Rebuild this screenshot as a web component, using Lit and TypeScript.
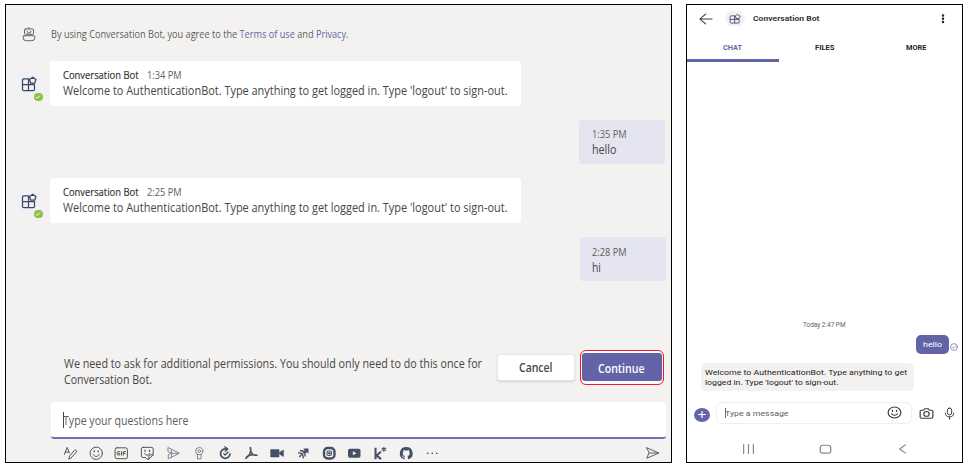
import { LitElement, html, css, svg, TemplateResult, SVGTemplateResult } from "lit";
import { customElement, property, state } from "lit/decorators.js";
import { styleMap } from "lit/directives/style-map.js";

/** One line of text condensed or expanded to a given measure. */
@customElement("fit-line")
class FitLine extends LitElement {
  static styles = css`
    :host { display: block; white-space: nowrap; flex: none; }
    .line { display: inline-block; transform-origin: 0 50%; vertical-align: top; }
    ::slotted(a) { color: #6264a7; text-decoration: none; }
  `;
  @property({ type: Number }) measure = 100;
  @state() private ratio = 1;

  firstUpdated() {
    const line = this.renderRoot.querySelector<HTMLElement>(".line")!;
    const natural = line.getBoundingClientRect().width;
    if (natural > 0) this.ratio = this.measure / natural;
    this.style.width = `${this.measure}px`;
  }
  render() {
    return html`<span class="line" style=${styleMap({ transform: `scaleX(${this.ratio})` })}><slot></slot></span>`;
  }
}

const icons: Record<string, SVGTemplateResult> = {
  robot: svg`<rect x="3.500" y="2" width="9" height="5.800" rx="1.200"/><path d="M8 .6V2M6.200 4.300v.7M9.800 4.300v.7M6.500 6.200h3M3 9.300h10a.8.800 0 0 1 .8.800v1.500a3 3 0 0 1-3 3H5.200a3 3 0 0 1-3-3v-1.500A.8.800 0 0 1 3 9.300z"/>`,
  app: svg`<path d="M1.500 4.200a1.300 1.300 0 0 1 1.300-1.300H7.500V14.500H2.800a1.300 1.300 0 0 1-1.300-1.300zM1.500 8.700h12v4.500a1.300 1.300 0 0 1-1.300 1.300H7.500M7.500 8.700V6.500"/><path d="M11.700 1.200 14.900 3.500 13.700 7.200H9.700L8.500 3.500z"/>`,
  format: svg`<path d="M1.500 9.300 4.600 1.500 7 7.500M2.600 6.800H6M6.500 14l.7-2.900 5.500-6.300a1.400 1.400 0 0 1 2 1.900l-5.600 6.300z"/>`,
  smile: svg`<circle cx="8" cy="8" r="6.800"/><path d="M4.700 9.400c.8 1.500 2 2.100 3.300 2.100s2.500-.6 3.300-2.100"/><path d="M5.800 5.500v.9M10.200 5.500v.9" stroke-width="1.500"/>`,
  gif: svg`<rect x="1.200" y="2" width="13.600" height="12" rx="2"/><path d="M6.300 6.300H4.300a.8.800 0 0 0-.8.800v2a.8.800 0 0 0 .8.800h2V8.200H5.200M8.300 6.200v3.900M10.300 10.100V6.300h2.500M10.300 8.300h2"/>`,
  sticker: svg`<path d="M3.100 1.500h9.800a1.600 1.600 0 0 1 1.600 1.600v6.700l-4.700 4.700H7.500L6 12.700H3.100a1.600 1.600 0 0 1-1.600-1.600v-8a1.600 1.600 0 0 1 1.600-1.600zM14.500 9.800h-3.200a1.500 1.500 0 0 0-1.500 1.500v3.200M5 8.300c.8 1.300 1.800 1.800 3 1.800s2.200-.5 3-1.800"/><path d="M5.500 4.900v.9M10.500 4.900v.9" stroke-width="1.500"/>`,
  stream: svg`<path d="M2.500 1.800 14.700 8 2.500 14.200V9.700L6 8 2.500 6.300zM6 3.800v8.400M6 8h8"/>`,
  praise: svg`<circle cx="8" cy="5.700" r="4"/><circle cx="8" cy="5.700" r="1.500"/><path d="M6 9.200v5h4v-5"/>`,
  updates: svg`<path d="M9.500 3.400A5.200 5.200 0 1 0 13.200 9" stroke-width="1.900"/><path d="M7.500.8 10.800 3.300 8 5.800M6.300 8.400l1.600 1.600 3.300-3.400" stroke-width="1.400"/>`,
  acrobat: svg`<path d="M7 1.700c.1 3.600.9 6.200 3 7.700 1.500 1 3 1 4.300.8M7.300 2c.6 4.600-1.500 9-5.300 11.700M3.200 11.800c3-2.300 6.500-2.500 10.500-1.600" stroke-width="1.700"/>`,
  video: svg`<path d="M1.100 4h8.800v8H1.100zM10.800 7l3.900-2.500v7L10.800 9z" fill="currentColor" stroke-width=".8"/>`,
  arrows: svg`<path d="M8 2.800h5.800v5.600l-1.800-1.400-1.300 1.300-2.400-2.400 1.400-1.300z" fill="currentColor" stroke="none"/><path d="M4.800 5.200 9 5.800 10.200 11M2.800 7.500l4.300.9 1 4.600M4 11.700l3-3M8.300 7.300l1-1" stroke-width="1.500"/>`,
  target: svg`<rect x="2.200" y="2.200" width="11.600" height="11.600" rx="4.200" stroke-width="2.600"/><rect x="5.500" y="5.500" width="5" height="5" rx="1.600" stroke-width="1.200"/><circle cx="8" cy="8" r=".9" fill="currentColor"/>`,
  play: svg`<path fill="currentColor" fill-rule="evenodd" stroke="none" d="M3.100 3h9.800a2 2 0 0 1 2 2v6a2 2 0 0 1-2 2H3.100a2 2 0 0 1-2-2V5a2 2 0 0 1 2-2zM6.500 5.700v4.600l4-2.300z"/>`,
  kstar: svg`<path d="M2.800 2V14.500M8.700 6.300 4 10.400 8.900 14.500" stroke-width="2.300" stroke-linecap="butt"/><path d="M12 1.300v4.600M9.900 2.600l4.200 2M14.100 2.600 9.900 4.600" stroke-width="1.200"/>`,
  octocat: svg`<path fill="currentColor" stroke="none" d="M8 1a7 7 0 0 0-2.400 13.600c.4.100.6-.1.600-.4v-1.500c-1.700.4-2.300-.6-2.500-1.200-.3-.6-.7-.8-.8-1 .9-.2 1.400.7 1.700 1.100.4.600 1.100.5 1.600.2.100-.5.300-.8.500-.9-1.500-.3-2.500-1.100-2.500-3 0-.7.200-1.300.6-1.800-.2-.5-.1-1.200.1-1.700.7 0 1.300.3 1.800.7a6 6 0 0 1 2.600 0c.6-.4 1.200-.7 1.800-.7.200.5.300 1.200.1 1.700.4.500.6 1.100.6 1.800 0 1.900-1 2.700-2.500 3 .3.300.5.800.5 1.500v1.800c0 .3.200.5.600.4A7 7 0 0 0 8 1z"/>`,
  more: svg`<path d="M3 8h.01M8 8h.01M13 8h.01" stroke-width="1.900"/>`,
  send: svg`<path d="M1.800 2 14.800 8 1.800 14 4.300 8zM4.300 8h10"/>`,
  back: svg`<path d="M15 8H1M7.500 1.500 1 8l6.500 6.500"/>`,
  kebab: svg`<path d="M8 2.500h.01M8 8h.01M8 13.500h.01" stroke-width="4"/>`,
  check: svg`<circle cx="8" cy="8" r="6.800"/><path d="M4.800 8.200 7 10.300l4.300-4.400"/>`,
  camera: svg`<path d="M2.600 4h2.200l1.300-1.900h3.800L11.200 4h2.200a1.400 1.400 0 0 1 1.400 1.400v7a1.400 1.400 0 0 1-1.400 1.400H2.600a1.400 1.400 0 0 1-1.400-1.400v-7A1.400 1.400 0 0 1 2.600 4z"/><ellipse cx="8" cy="8.500" rx="2.800" ry="2.900"/>`,
  mic: svg`<rect x="5.400" y="1.300" width="5.200" height="8.400" rx="2.600"/><path d="M2.800 7.500c0 3 2 4.700 5.200 4.700s5.200-1.700 5.200-4.700M8 12.200V15"/>`,
  recents: svg`<path d="M2 2v12M8 2v12M14 2v12"/>`,
  home: svg`<rect x="1.500" y="3" width="13" height="10.500" rx="3.200"/>`,
  chevron: svg`<path d="M11.500 2.500 4.500 8l7 5.500"/>`,
  tick: svg`<path d="M3.500 8.500 6.500 11.500 12.500 5"/>`,
  plus: svg`<path d="M8 1v14M1 8h14"/>`,
};

const icon = (name: string, cls = ""): TemplateResult =>
  html`<svg class="icon ${cls}" viewBox="0 0 16 16" preserveAspectRatio="none" aria-hidden="true">${icons[name]}</svg>`;

const shared = css`
  * { box-sizing: border-box; }
  .icon { display: block; flex: none; width: 16px; height: 16px; fill: none; stroke: currentColor; stroke-width: 1; stroke-linecap: round; stroke-linejoin: round; overflow: visible; }
`;

@customElement("desktop-chat")
class DesktopChat extends LitElement {
  static styles = [shared, css`
    :host { display: flex; flex-direction: column; box-sizing: border-box; width: 667px; height: 459px; border: 1px solid #000; background: #f3f2f1; color: #484644; font: 11.700px/16px "Open Sans", "Noto Sans", sans-serif; }
    .consent { display: flex; align-items: center; height: 20px; margin-top: 19px; padding-left: 15px; color: #605e5c; font-size: 10.300px; }
    .consent .icon { width: 16px; height: 15px; margin-right: 13.500px; color: #605e5c; }
    .bot { display: flex; margin-top: 16.500px; padding-left: 10px; }
    .bot.later { margin-top: 14px; }
    .avatar { position: relative; display: grid; place-items: center; flex: none; width: 26px; height: 26px; margin: 10px 8px 0 0; background: #eff1f5; border-radius: 8px; color: #3c4662; }
    .avatar .icon { width: 16px; height: 16px; stroke-width: 1.250; }
    .presence { position: absolute; right: -.5px; bottom: -4.500px; width: 8.500px; height: 8.500px; border-radius: 50%; background: #8cc04b; color: #fff; display: grid; place-items: center; }
    .presence .icon { width: 6px; height: 6px; stroke-width: 2.500; }
    .card { width: 470.500px; height: 45.500px; padding: 6.500px 12.500px 0; border-radius: 3px; background: #fff; }
    .meta { display: flex; gap: 8.500px; height: 15px; font-size: 10.300px; color: #605e5c; }
    .author { color: #323130; font-weight: 500; -webkit-text-stroke: .15px #323130; }
    .mine { width: 86px; height: 44px; margin: 13.500px 6px 0 auto; padding: 6.500px 12.500px 0; border-radius: 3px; background: #e5e5f1; }
    .mine.later { margin: 14px 5.500px 0 auto; }
    .permission { display: flex; height: 36px; margin-top: 68px; padding-left: 57.500px; align-items: center; line-height: 16px; }
    .copy { width: 418px; margin-right: 15px; margin-top: 7px; }
    .button { display: grid; place-items: center; font-family: inherit; font-size: 11.700px; line-height: 16px; font-weight: 600; border: 0; padding: 0; border-radius: 3px; }
    .cancel { width: 78px; height: 27px; background: #fff; color: #484644; border: 1px solid #e7e6e5; box-shadow: 0 1px 2px #0002; }
    .focus { display: grid; place-items: center; width: 84px; height: 35px; margin-left: 5px; border: 1px solid #ed1c24; border-radius: 6px; background: #fafafa; }
    .continue { width: 80px; height: 28px; padding-top: 1px; background: #6264a7; color: #fff; }
    .compose { display: flex; align-items: center; width: 615px; height: 37px; margin: 17px 0 0 44.500px; padding: 1px 0 0 12.500px; background: #fff; border-bottom: 2px solid #6f71b0; border-radius: 3px; color: #605e5c; }
    .caret { width: 1px; height: 16px; margin-right: -1px; background: #484644; }
    .tools { display: flex; align-items: center; height: 16px; margin-top: 6px; padding-left: 56px; color: #464f66; }
    .tool { display: grid; place-items: center; width: 25.900px; height: 16px; margin-left: -5px; margin-right: 5px; }
    .tool .icon { width: 14.500px; height: 14.500px; stroke-width: 1.100; }
    .light { color: #7c8496; }
    .ink { color: #55534f; }
    .send { margin-left: auto; margin-right: 11.500px; color: #55534f; }
    .send .icon { width: 15px; height: 14px; }
  `];

  private tools = ["format", "smile", "gif", "sticker", "stream", "praise", "updates", "acrobat", "video", "arrows", "target", "play", "kstar", "octocat", "more"];

  private tone(name: string) {
    if (["format", "smile", "gif", "sticker", "more"].includes(name)) return "ink";
    return ["stream", "praise"].includes(name) ? "light" : "";
  }
  private botMessage(time: string, later = false) {
    return html`<div class="bot ${later ? "later" : ""}">
      <div class="avatar">${icon("app")}<span class="presence">${icon("tick")}</span></div>
      <div class="card">
        <div class="meta"><fit-line class="author" .measure=${75.5}>Conversation Bot</fit-line><fit-line .measure=${34.5}>${time}</fit-line></div>
        <fit-line .measure=${444.5}>Welcome to AuthenticationBot. Type anything to get logged in. Type 'logout' to sign-out.</fit-line>
      </div>
    </div>`;
  }
  private ownMessage(time: string, text: string, measure: number, later = false) {
    return html`<div class="mine ${later ? "later" : ""}">
      <div class="meta"><fit-line .measure=${34.5}>${time}</fit-line></div>
      <fit-line .measure=${measure}>${text}</fit-line>
    </div>`;
  }
  render() {
    return html`
      <div class="consent">${icon("robot")}<fit-line .measure=${297.5}>By using Conversation Bot, you agree to the <a>Terms of use</a> and <a>Privacy</a>.</fit-line></div>
      ${this.botMessage("1:34 PM")}
      ${this.ownMessage("1:35 PM", "hello", 24.5)}
      ${this.botMessage("2:25 PM", true)}
      ${this.ownMessage("2:28 PM", "hi", 9, true)}
      <div class="permission">
        <div class="copy">
          <fit-line .measure=${418}>We need to ask for additional permissions. You should only need to do this once for</fit-line>
          <fit-line .measure=${88}>Conversation Bot.</fit-line>
        </div>
        <button class="button cancel"><fit-line .measure=${33.5}>Cancel</fit-line></button>
        <div class="focus"><button class="button continue"><fit-line .measure=${46.5}>Continue</fit-line></button></div>
      </div>
      <div class="compose"><span class="caret"></span><fit-line .measure=${125.5}>Type your questions here</fit-line></div>
      <div class="tools">
        ${this.tools.map((t) => html`<span class="tool ${this.tone(t)}">${icon(t)}</span>`)}
        <span class="send">${icon("send")}</span>
      </div>`;
  }
}

@customElement("mobile-chat")
class MobileChat extends LitElement {
  static styles = [shared, css`
    :host { display: flex; flex-direction: column; box-sizing: border-box; width: 277px; height: 459px; border: 1px solid #000; background: #fff; color: #252423; font: 500 7.500px/9.500px Roboto, sans-serif; }
    .header { display: flex; align-items: center; height: 27px; padding-left: 12px; }
    .back { width: 14px; height: 12px; stroke-width: 1.300; color: #3b3a39; }
    .avatar { display: grid; place-items: center; width: 21px; height: 15px; margin: 0 7px 0 11.500px; background: #f0f1f5; clip-path: polygon(22% 0, 78% 0, 100% 50%, 78% 100%, 22% 100%, 0 50%); color: #3c4662; }
    .avatar .icon { width: 12px; height: 10px; stroke-width: 1.200; }
    .header .title { font-weight: 700; color: #3b3a39; }
    .kebab { width: 10px; height: 9.500px; margin-left: auto; margin-right: 14px; }
    .tabs { display: grid; grid-template-columns: repeat(3, 1fr); height: 30px; }
    .tab { display: grid; place-items: center; padding-top: 7px; border-bottom: 3px solid transparent; font-size: 7px; font-weight: 700; }
    .active { color: #6264a7; border-color: #6264a7; }
    .day { display: grid; place-items: center; height: 10px; margin-top: 258.500px; padding-right: 1px; color: #605e5c; font-size: 6.500px; font-weight: 400; }
    .sent { display: flex; justify-content: flex-end; align-items: flex-end; margin-top: 4.500px; padding-right: 4px; color: #6264a7; }
    .hello { display: grid; place-items: center; width: 33px; height: 18.500px; border-radius: 5px; background: #6264a7; color: #fff; font-size: 8px; font-weight: 400; }
    .sent .icon { width: 8px; height: 8px; margin: 0 0 2.500px 1.500px; stroke-width: 1.400; }
    .reply { width: 213.500px; height: 28px; margin: 9.500px 0 0 13.500px; padding: 5px 5px 0 4.500px; border-radius: 5px; background: #f3f2f1; font-weight: 400; font-size: 8px; }
    .compose { display: flex; align-items: center; height: 22px; margin-top: 11px; padding-left: 7px; color: #3b3a39; }
    .add { display: grid; place-items: center; width: 16px; height: 14px; margin: 3px 6px 0 0; border-radius: 50%; background: #6264a7; color: #fff; }
    .add .icon { width: 8px; height: 7px; stroke-width: 2.500; }
    .field { display: flex; align-items: center; width: 196px; height: 22px; padding: 0 9px 0 8px; border: 1.500px solid #f0efee; border-radius: 6px; color: #605e5c; font-size: 8px; font-weight: 400; }
    .field fit-line { margin-top: 1px; }
    .caret { width: 1px; height: 10px; margin-right: -1px; background: #6264a7; }
    .field .icon { width: 15px; height: 13px; margin: -2px 0 0 auto; color: #323130; stroke-width: 1.200; }
    .camera { width: 15px; height: 13px; margin: 0 9px 0 7px; stroke-width: 1.250; }
    .mic { width: 13px; height: 13px; stroke-width: 1.200; }
    .nav { display: grid; grid-template-columns: repeat(3, 77px); justify-content: center; justify-items: center; align-items: center; height: 20px; margin: 14.500px 0 0 1px; color: #8a8988; }
    .nav .icon { width: 13px; height: 12px; stroke-width: 1.500; }
  `];
  render() {
    return html`
      <div class="header">${icon("back", "back")}<span class="avatar">${icon("app")}</span><fit-line class="title" .measure=${66.5}>Conversation Bot</fit-line>${icon("kebab", "kebab")}</div>
      <div class="tabs">
        <div class="tab active"><fit-line .measure=${19}>CHAT</fit-line></div>
        <div class="tab"><fit-line .measure=${19.5}>FILES</fit-line></div>
        <div class="tab"><fit-line .measure=${20.5}>MORE</fit-line></div>
      </div>
      <div class="day"><fit-line .measure=${42.5}>Today 2:47 PM</fit-line></div>
      <div class="sent"><div class="hello"><fit-line .measure=${19}>hello</fit-line></div>${icon("check")}</div>
      <div class="reply">
        <fit-line .measure=${202}>Welcome to AuthenticationBot. Type anything to get</fit-line>
        <fit-line .measure=${133.5}>logged in. Type 'logout' to sign-out.</fit-line>
      </div>
      <div class="compose">
        <span class="add">${icon("plus")}</span>
        <div class="field"><span class="caret"></span><fit-line .measure=${63.5}>Type a message</fit-line>${icon("smile")}</div>
        ${icon("camera", "camera")}${icon("mic", "mic")}
      </div>
      <div class="nav">${icon("recents")}${icon("home")}${icon("chevron")}</div>`;
  }
}

@customElement("app-root")
class AppRoot extends LitElement {
  static styles = css`
    :host { display: flex; gap: 14px; box-sizing: border-box; width: 968px; height: 466px; padding: 4px 0 0 5px; background: #fff; overflow: hidden; }
  `;
  render() {
    return html`<desktop-chat></desktop-chat><mobile-chat></mobile-chat>`;
  }
}
